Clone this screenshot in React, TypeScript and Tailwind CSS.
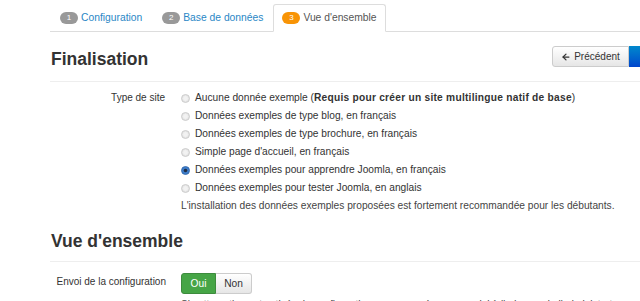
import { ArrowLeft } from 'lucide-react'

const tabs = [
  { n: 1, label: 'Configuration', active: false },
  { n: 2, label: 'Base de données', active: false },
  { n: 3, label: "Vue d'ensemble", active: true },
]

const siteTypes = [
  { label: 'Données exemples de type blog, en français', checked: false },
  { label: 'Données exemples de type brochure, en français', checked: false },
  { label: "Simple page d'accueil, en français", checked: false },
  { label: 'Données exemples pour apprendre Joomla, en français', checked: true },
  { label: 'Données exemples pour tester Joomla, en anglais', checked: false },
]

function Radio({ checked }: { checked: boolean }) {
  return (
    <svg width="9" height="9" viewBox="0 0 9 9" className="shrink-0">
      <circle cx="4.5" cy="4.5" r="4" fill={checked ? '#3d7cc9' : '#e6e6e6'} stroke={checked ? '#2f64a8' : '#c4c4c4'} strokeWidth="0.8" />
      {checked ? <circle cx="4.5" cy="4.5" r="1.8" fill="#1f2d44" /> : <circle cx="4.5" cy="4.5" r="2.4" fill="#f2f2f2" />}
    </svg>
  )
}

export default function App() {
  return (
    <div className="w-[640px] h-[301px] overflow-hidden bg-white text-[#333] font-['Liberation_Sans',Arial,sans-serif] text-[10.2px]">
      <div className="pl-[50px]">
        {/* steps */}
        <div className="flex items-end h-[32px] border-b border-[#ddd]">
          {tabs.map((t) => (
            <div key={t.n}
              className={"flex items-center h-[28px] -mb-px " + (t.active ? 'px-[8px] bg-white border border-[#ddd] border-b-white rounded-t-[3px] text-[#555]' : 'px-[10px] text-[#2a87c6]')}>
              <span className={"inline-flex items-center justify-center w-[18px] h-[12px] rounded-full text-white text-[8px] mr-[3px] " + (t.active ? 'bg-[#f89406]' : 'bg-[#999]')}>
                {t.n}
              </span>
              <span className="text-[10.3px]">{t.label}</span>
            </div>
          ))}
        </div>

        {/* Finalisation */}
        <div className="flex justify-between items-start -mr-[50px] mt-[14px] pb-[12px] border-b border-[#eee]">
          <h2 className="text-[17.5px] leading-[20px] font-bold pt-[3px] pl-[1px]">Finalisation</h2>
          <div className="flex">
            <button className="flex items-center gap-[3px] h-[21px] w-[77px] justify-center border border-[#ccc] rounded-l-[3px] bg-gradient-to-b from-white to-[#e6e6e6] text-[#333] text-[10px]">
              <ArrowLeft size={10} strokeWidth={3} />
              Précédent
            </button>
            <button aria-label="Suivant" className="h-[21px] w-[61px] bg-gradient-to-b from-[#0088cc] to-[#0044cc] rounded-r-[3px]" />
          </div>
        </div>

        <div className="flex mt-[7px]">
          <div className="w-[115px] shrink-0 text-right leading-[18px] text-[10px]">Type de site</div>
          <div className="ml-[16px] flex flex-col">
            <div className="flex items-center gap-[5px] h-[18px]">
              <Radio checked={false} />
              <span>Aucune donnée exemple (<b className="tracking-[0.25px]">Requis pour créer un site multilingue natif de base</b>)</span>
            </div>
            {siteTypes.map((s) => (
              <div key={s.label} className="flex items-center gap-[5px] h-[18px]">
                <Radio checked={s.checked} />
                <span>{s.label}</span>
              </div>
            ))}
            <div className="h-[18px] leading-[18px] text-[#444]">L'installation des données exemples proposées est fortement recommandée pour les débutants.</div>
          </div>
        </div>

        {/* Vue d'ensemble */}
        <div className="mt-[16px] pb-[10px] border-b border-[#eee]">
          <h2 className="text-[17.5px] leading-[20px] font-bold pl-[1px]">Vue d'ensemble</h2>
        </div>

        <div className="flex mt-[11px]">
          <div className="w-[116px] shrink-0 text-right leading-[16px] pt-[1px] whitespace-nowrap text-[10px]">Envoi de la configuration</div>
          <div className="ml-[15px] flex flex-col">
            <div className="flex h-[21px]">
              <span className="w-[35px] flex items-center justify-center bg-[#46a546] border border-[#3d8b3d] text-white rounded-l-[3px]">Oui</span>
              <span className="w-[36px] flex items-center justify-center bg-gradient-to-b from-white to-[#e6e6e6] border border-l-0 border-[#ccc] rounded-r-[3px]">Non</span>
            </div>
            <div className="mt-[3px] text-[#444] whitespace-nowrap">Si cette option est activée, la configuration sera envoyée par courriel à l'adresse de l'administrateur.</div>
          </div>
        </div>
      </div>
    </div>
  )
}
